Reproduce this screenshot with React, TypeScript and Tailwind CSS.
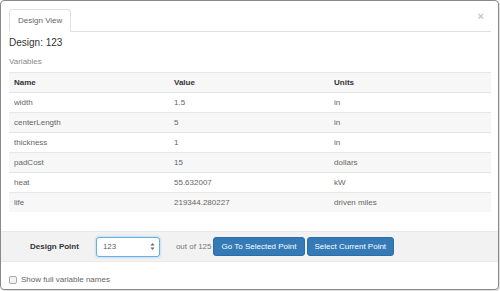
import React from "react";

const rows: [string, string, string][] = [
  ["width", "1.5", "in"],
  ["centerLength", "5", "in"],
  ["thickness", "1", "in"],
  ["padCost", "15", "dollars"],
  ["heat", "55.632007", "kW"],
  ["life", "219344.280227", "driven miles"],
];

export default function App() {
  return (
    <div className="w-[500px] h-[291px] bg-white font-['Liberation_Sans',Arial,sans-serif] text-[#333]">
      <div className="w-[499px] h-[290px] border border-[#8a8a8a] rounded-[4px] bg-white flex flex-col shadow-[1px_1px_0_rgba(0,0,0,0.12)] overflow-hidden">
        <div className="pl-[8px] pr-[7px] pt-[8px] flex flex-col">
          <div className="flex items-start border-b border-[#e0e0e0]">
            <div className="h-[23px] -mb-px px-[8px] border border-[#e0e0e0] border-b-white bg-white rounded-t-[3px] flex items-center text-[8px] text-[#666]">
              Design View
            </div>
            <div className="ml-auto mr-[7px] mt-[1px] text-[11px] leading-[12px] text-[#c8c8c8] font-bold">×</div>
          </div>
          <div className="mt-[4px] text-[10px] leading-[14px] text-[#333]">Design: 123</div>
          <div className="mt-[6px] text-[8px] leading-[12px] text-[#8a8a8a]">Variables</div>
          <div className="mt-[4px] flex flex-col text-[8px]">
            <div className="grid grid-cols-[160px_160px_1fr] h-[20px] items-center border-t border-[#e6e6e6] bg-[#f7f7f7] font-bold text-[#333]">
              <div className="pl-[5px]">Name</div>
              <div className="pl-[5px]">Value</div>
              <div className="pl-[5px]">Units</div>
            </div>
            {rows.map((r, i) => (
              <div
                key={r[0]}
                className={
                  "grid grid-cols-[160px_160px_1fr] h-[20px] items-center border-t border-[#e6e6e6] text-[#666] " +
                  (i % 2 === 1 ? "bg-[#f7f7f7]" : "bg-white")
                }
              >
                <div className="pl-[5px]">{r[0]}</div>
                <div className="pl-[5px]">{r[1]}</div>
                <div className="pl-[5px]">{r[2]}</div>
              </div>
            ))}
          </div>
        </div>
        <div className="mt-[19px] h-[31px] bg-[#f2f2f2] border-t border-b border-[#e8e8e8] flex items-center pl-[29px] text-[8px]">
          <div className="font-bold text-[#333]">Design Point</div>
          <div className="ml-[17px] w-[64px] h-[20px] bg-white border border-[#66afe9] rounded-[3px] shadow-[0_0_3px_rgba(102,175,233,0.6)] flex items-center pl-[6px] pr-[4px] text-[#666]">
            <span>123</span>
            <svg className="ml-auto" width="5" height="9" viewBox="0 0 5 9">
              <path d="M2.5 1 L4.5 3.5 L0.5 3.5 Z" fill="#666" />
              <path d="M2.5 8 L4.5 5.5 L0.5 5.5 Z" fill="#666" />
            </svg>
          </div>
          <div className="ml-[16px] text-[#777]">out of 125</div>
          <button className="ml-[2px] h-[19px] px-[7px] bg-[#337ab7] border border-[#2e6da4] rounded-[3px] text-white text-[8px]">
            Go To Selected Point
          </button>
          <button className="ml-[2px] h-[19px] px-[7px] bg-[#337ab7] border border-[#2e6da4] rounded-[3px] text-white text-[8px]">
            Select Current Point
          </button>
        </div>
        <div className="mt-[12px] pl-[8px] flex items-center text-[8px] text-[#666]">
          <div className="w-[8px] h-[8px] border border-[#aaa] rounded-[2px] bg-[#f4f4f4]" />
          <div className="ml-[4px]">Show full variable names</div>
        </div>
      </div>
    </div>
  );
}
